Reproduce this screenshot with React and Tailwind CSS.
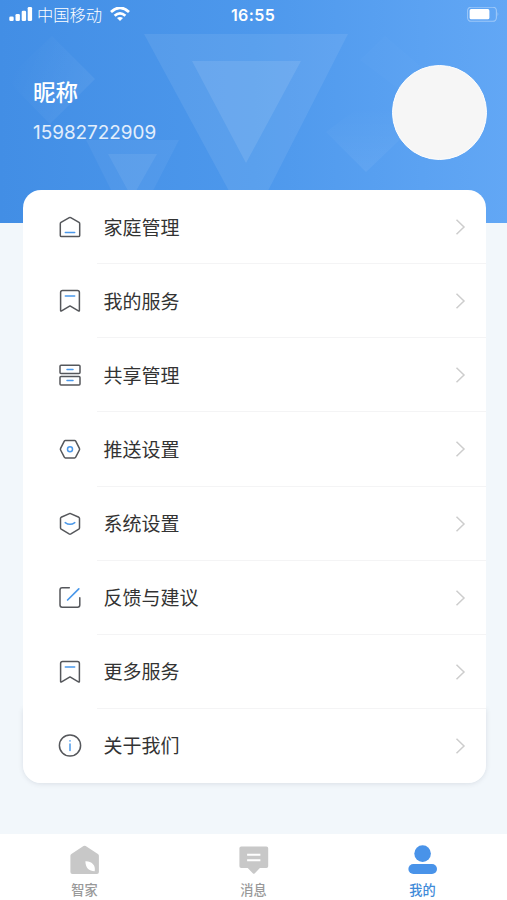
const INK = "#55575b";
const BLUE = "#4a98ea";

function LineIcon({ children }) {
  return (
    <svg className="block h-6 w-6 shrink-0" viewBox="0 0 24 24" fill="none" stroke={INK} strokeWidth="1.5" strokeLinecap="round" strokeLinejoin="round">
      {children}
    </svg>
  );
}

const HomeIcon = () => (
  <LineIcon>
    <path d="M2.3 8.7 Q2.3 7.9 3 7.4 L11.3 2.6 Q12 2.2 12.7 2.6 L21 7.4 Q21.7 7.9 21.7 8.7 V20.4 Q21.7 21.6 20.5 21.6 H3.5 Q2.3 21.6 2.3 20.4 Z" />
    <path d="M7.3 17.4 H16.7" stroke={BLUE} />
  </LineIcon>
);

const BookmarkIcon = () => (
  <LineIcon>
    <path d="M2.6 3.6 Q2.6 1.6 4.6 1.6 H19.4 Q21.4 1.6 21.4 3.6 V21.4 Q21.4 22.5 20.4 21.9 L12 16.9 L3.6 21.9 Q2.6 22.5 2.6 21.4 Z" />
    <path d="M7.3 6.9 H16.7" stroke={BLUE} />
  </LineIcon>
);

const DrawersIcon = () => (
  <LineIcon>
    <rect x="2" y="2.3" width="20" height="8.3" rx="1" />
    <rect x="2" y="13.6" width="20" height="8.3" rx="1" />
    <path d="M9 6.5 H15 M9 17.5 H15" stroke={BLUE} />
  </LineIcon>
);

const NutIcon = () => (
  <LineIcon>
    <path d="M7.4 3.5 H16.6 Q17.3 3.5 17.7 4.2 L21.4 11.4 Q21.8 12.2 21.4 13 L17.7 20.2 Q17.3 20.9 16.6 20.9 H7.4 Q6.7 20.9 6.3 20.2 L2.6 13 Q2.2 12.2 2.6 11.4 L6.3 4.2 Q6.7 3.5 7.4 3.5 Z" />
    <circle cx="12" cy="12.2" r="2.5" stroke={BLUE} />
  </LineIcon>
);

const ShieldIcon = () => (
  <LineIcon>
    <path d="M12 1.4 L20.9 5.3 Q21.5 5.6 21.5 6.4 V15.8 Q21.5 16.7 20.8 17.2 L12.9 21.9 Q12 22.4 11.1 21.9 L3.2 17.2 Q2.5 16.7 2.5 15.8 V6.4 Q2.5 5.6 3.1 5.3 Z" />
    <path d="M7.2 10.6 Q12 14 16.8 10.6" stroke={BLUE} />
  </LineIcon>
);

const EditIcon = () => (
  <LineIcon>
    <path d="M11.3 1.8 H4.2 Q2 1.8 2 4 V19 Q2 21.2 4.2 21.2 H19.6 Q21.8 21.2 21.8 19 V11.8" />
    <path d="M9.6 14 L20.8 2.8" stroke={BLUE} strokeWidth="1.7" />
  </LineIcon>
);

const InfoIcon = () => (
  <LineIcon>
    <circle cx="12" cy="11.5" r="10.6" />
    <path d="M12 10.1 V16.5" stroke={BLUE} />
    <path d="M12 6.8 V7" stroke={BLUE} />
  </LineIcon>
);

const rows = [
  { label: "家庭管理", Icon: HomeIcon },
  { label: "我的服务", Icon: BookmarkIcon },
  { label: "共享管理", Icon: DrawersIcon },
  { label: "推送设置", Icon: NutIcon },
  { label: "系统设置", Icon: ShieldIcon },
  { label: "反馈与建议", Icon: EditIcon },
  { label: "更多服务", Icon: BookmarkIcon },
  { label: "关于我们", Icon: InfoIcon },
];

function HeaderArt() {
  return (
    <svg className="absolute inset-0 h-full w-full" viewBox="0 0 507 223" preserveAspectRatio="none">
      <defs>
        <linearGradient id="leftDiamond" x1="0" y1="0" x2="1" y2="0.4">
          <stop offset="0.2" stopColor="#fff" stopOpacity="0" />
          <stop offset="1" stopColor="#fff" stopOpacity="0.06" />
        </linearGradient>
        <linearGradient id="rightDiamond" x1="0" y1="0" x2="0" y2="1">
          <stop offset="0.15" stopColor="#fff" stopOpacity="0" />
          <stop offset="1" stopColor="#fff" stopOpacity="0.06" />
        </linearGradient>
      </defs>
      <path d="M52 36 L95 79 L50 124 L6 79 Z" fill="url(#leftDiamond)" />
      <path d="M374 96 L410 130 L366 172 L326 132 Z" fill="url(#rightDiamond)" />
      <path d="M385 36 L420 66 L400 90 L360 60 Z" fill="#fff" fillOpacity="0.015" />
      <path d="M144 34 H348 L249 228 Z" fill="#fff" fillOpacity="0.08" />
      <path d="M192 61 H301 L246 163 Z" fill="#fff" fillOpacity="0.1" />
      <path d="M86 140 H179 L132 232 Z" fill="#fff" fillOpacity="0.05" />
      <path d="M108 154 H157 L132 198 Z" fill="#fff" fillOpacity="0.07" />
    </svg>
  );
}

function StatusBar() {
  return (
    <div className="grid h-[30px] grid-cols-[1fr_auto_1fr] items-center pl-[9px] pr-[8px]">
      <div className="flex items-center">
        <svg className="h-4 w-6" viewBox="0 0 24 16" fill="#fff">
          <rect x="0.3" y="9.5" width="4.4" height="4.5" rx="1.3" />
          <rect x="6.5" y="7" width="4.4" height="7" rx="1.3" />
          <rect x="12.7" y="3.8" width="4.4" height="10.2" rx="1.3" />
          <rect x="18.7" y="0" width="4.4" height="14" rx="1.3" />
        </svg>
        <span className="ml-[4px] w-[66px] whitespace-nowrap pt-px text-[16.3px] font-light leading-none">中国移动</span>
        <svg className="ml-[7px] h-[15px] w-5" viewBox="0 0 20 15" fill="none" stroke="#fff" strokeWidth="2.8">
          <path d="M1 5 Q10 -3.2 19 5" />
          <path d="M4.6 8.8 Q10 4 15.4 8.8" />
          <path d="M10 14 L7 11.1 Q10 8.8 13 11.1 Z" fill="#fff" stroke="none" />
        </svg>
      </div>
      <span className="pr-[2px] text-[16px] font-semibold leading-none tracking-[0.4px]">16:55</span>
      <svg className="h-4 w-8 justify-self-end" viewBox="0 0 32 16">
        <rect x="0.6" y="0.1" width="28.8" height="14.2" rx="3.6" fill="none" stroke="#fff" strokeOpacity="0.38" strokeWidth="1.1" />
        <rect x="2.6" y="2.1" width="19.8" height="10.2" rx="1.6" fill="#fff" />
        <path d="M30.7 4.9 Q32 7.2 30.7 9.4 Z" fill="#fff" fillOpacity="0.5" />
      </svg>
    </div>
  );
}

function MenuRow({ label, Icon, last }) {
  return (
    <li className={`flex flex-1 items-stretch pl-[35px] ${last ? "" : ""}`}>
      <div className="flex w-[39px] items-center">
        <Icon />
      </div>
      <div className={`flex flex-1 items-center border-b pl-[7px] pr-[19px] ${last ? "border-transparent" : "border-[#f4f4f5]"}`}>
        <span className="flex-1 pt-[3px] text-[19px] leading-none text-[#333]">{label}</span>
        <svg className="mt-px h-4 w-[14px]" viewBox="0 0 14 16" fill="none" stroke="#cdcdcd" strokeWidth="1.5">
          <path d="M3.5 0.8 L11 8 L3.5 15.2" />
        </svg>
      </div>
    </li>
  );
}

function Tab({ label, active, children }) {
  return (
    <div className={`flex flex-1 flex-col items-center pt-[10px] text-[13.2px] font-medium leading-none ${active ? "text-[#3f8ad8]" : "text-[#999]"}`}>
      <svg className="mb-[8px] h-8 w-8" viewBox="0.6 0 32 32">
        {children}
      </svg>
      <span>{label}</span>
    </div>
  );
}

export default function App() {
  return (
    <div className="flex h-[900px] w-[507px] flex-col overflow-hidden bg-[#f2f7fb] font-[Inter,'Noto_Sans_CJK_SC',sans-serif]">
      <header className="relative h-[223px] shrink-0 bg-linear-to-r from-[#428ee5] via-[#4d98ec] to-[#62a7f5] text-white">
        <HeaderArt />
        <div className="relative">
          <StatusBar />
          <div className="flex items-start justify-between pl-[33px] pr-[20px] pt-[35px]">
            <div className="pt-[17px]">
              <h1 className="text-[22.5px] font-medium leading-none">昵称</h1>
              <p className="mt-[19px] text-[18.9px] leading-none text-white/85">15982722909</p>
            </div>
            <div className="h-[95px] w-[95px] rounded-full border border-white bg-[#f6f6f6]" />
          </div>
        </div>
      </header>

      <main className="relative -mt-[33px] ml-[22.5px] h-[593px] w-[463px] shrink-0">
        <div className="absolute inset-x-0 bottom-0 h-[75px] rounded-b-[18px] shadow-[0_1px_5px_rgba(60,70,90,0.13)]" />
        <ul className="relative flex h-full flex-col rounded-[18px] bg-white">
          {rows.map((row, i) => (
            <MenuRow key={row.label} {...row} last={i === rows.length - 1} />
          ))}
        </ul>
      </main>

      <nav className="mt-auto flex h-[66px] shrink-0 bg-white">
        <Tab label="智家">
          <path d="M3 10 Q2 10.6 2 11.8 V28 Q2 30 4 30 H28.5 Q30.5 30 30.5 28 V11.8 Q30.5 10.6 29.5 10 L17.3 2 Q16.2 1.3 15.1 2 Z" fill="#c8c8c8" />
          <path d="M17 17.2 C22.5 16.8 27.5 20.5 26.3 27.2 C20.5 27 17 23.8 17 17.2 Z" fill="#fff" />
        </Tab>
        <Tab label="消息">
          <path d="M3.8 2.5 H29 Q30.8 2.5 30.8 4.3 V22.3 Q30.8 24.1 29 24.1 H22.5 L17.2 29.4 Q16.4 30.2 15.6 29.4 L10.3 24.1 H3.8 Q2 24.1 2 22.3 V4.3 Q2 2.5 3.8 2.5 Z" fill="#c8c8c8" />
          <path d="M9.7 10.7 H23 M9.7 16.2 H23" stroke="#fff" strokeWidth="2.1" />
        </Tab>
        <Tab label="我的" active>
          <circle cx="16.2" cy="9.6" r="8.3" fill="#4993e9" />
          <rect x="2" y="20" width="28.6" height="10" rx="5" fill="#4993e9" />
        </Tab>
      </nav>
    </div>
  );
}
